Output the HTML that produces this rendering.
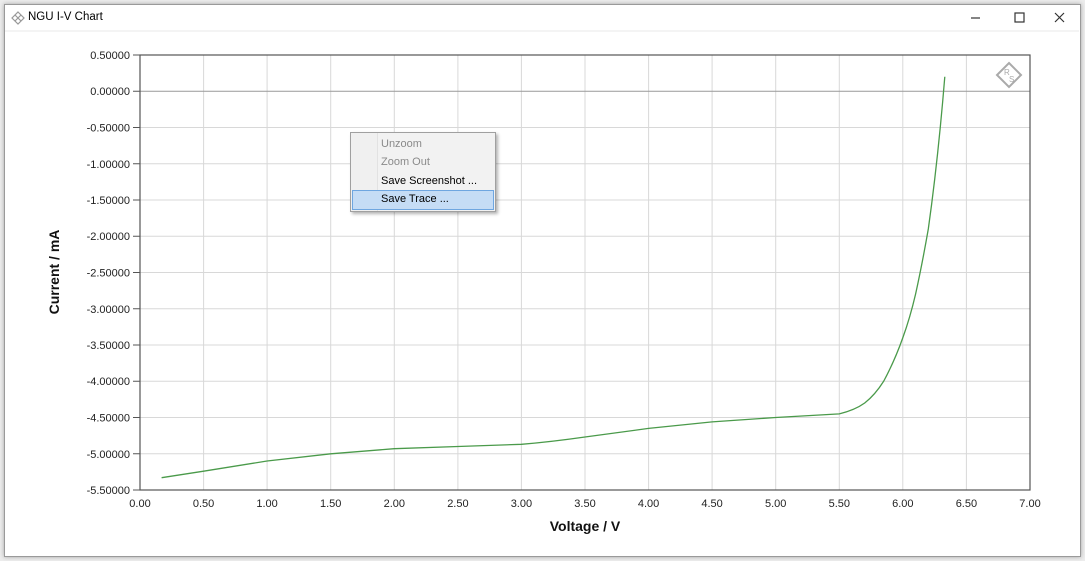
<!DOCTYPE html>
<html><head><style>
body{margin:0;width:1085px;height:561px;background:#ececec;font-family:"Liberation Sans",sans-serif;overflow:hidden;position:relative}
.win{position:absolute;left:4px;top:4px;width:1075px;height:551px;background:#fff;border:1px solid #9a9a9a;box-shadow:0 0 4px rgba(0,0,0,.3)}
.title{position:absolute;left:28px;top:11px;font-size:11.5px;color:#000}
.menu{position:absolute;left:350px;top:132px;width:144px;height:78px;background:#f2f2f2;border:1px solid #a0a0a0;box-shadow:2px 2px 3px rgba(0,0,0,.3);font-size:11px}
.menu div{position:absolute;left:30px}
</style></head><body>
<div class="win"></div>
<svg style="position:absolute;left:10px;top:10px" width="16" height="16"><g fill="none" stroke="#999" stroke-width="1.2"><path d="M8 2 L14 8 L8 14 L2 8Z"/><path d="M5 5 L11 11 M11 5 L5 11"/></g></svg>
<div class="title">NGU I-V Chart</div>
<svg style="position:absolute;left:0;top:0" width="1085" height="561">
<g stroke="#333" stroke-width="1.2"><line x1="971" y1="18" x2="980" y2="18"/></g>
<rect x="1015" y="13" width="9" height="9" fill="none" stroke="#333" stroke-width="1.2"/>
<path d="M1055 13 L1064 22 M1064 13 L1055 22" stroke="#333" stroke-width="1.2"/>
<line x1="5" y1="31" x2="1079" y2="31" stroke="#e8e8e8"/>
<g stroke="#d8d8d8" stroke-width="1">
<line x1="203.6" y1="55" x2="203.6" y2="490"/><line x1="267.1" y1="55" x2="267.1" y2="490"/><line x1="330.7" y1="55" x2="330.7" y2="490"/><line x1="394.3" y1="55" x2="394.3" y2="490"/><line x1="457.9" y1="55" x2="457.9" y2="490"/><line x1="521.4" y1="55" x2="521.4" y2="490"/><line x1="585" y1="55" x2="585" y2="490"/><line x1="648.6" y1="55" x2="648.6" y2="490"/><line x1="712.1" y1="55" x2="712.1" y2="490"/><line x1="775.7" y1="55" x2="775.7" y2="490"/><line x1="839.3" y1="55" x2="839.3" y2="490"/><line x1="902.8" y1="55" x2="902.8" y2="490"/><line x1="966.4" y1="55" x2="966.4" y2="490"/>
<line x1="140" y1="127.5" x2="1030" y2="127.5"/><line x1="140" y1="163.75" x2="1030" y2="163.75"/><line x1="140" y1="200" x2="1030" y2="200"/><line x1="140" y1="236.25" x2="1030" y2="236.25"/><line x1="140" y1="272.5" x2="1030" y2="272.5"/><line x1="140" y1="308.75" x2="1030" y2="308.75"/><line x1="140" y1="345" x2="1030" y2="345"/><line x1="140" y1="381.25" x2="1030" y2="381.25"/><line x1="140" y1="417.5" x2="1030" y2="417.5"/><line x1="140" y1="453.75" x2="1030" y2="453.75"/>
</g>
<line x1="140" y1="91.25" x2="1030" y2="91.25" stroke="#999"/>
<rect x="140" y="55" width="890" height="435" fill="none" stroke="#555" stroke-width="1.2"/>
<g stroke="#555"><line x1="133" y1="55" x2="140" y2="55"/><line x1="133" y1="91.25" x2="140" y2="91.25"/><line x1="133" y1="127.5" x2="140" y2="127.5"/><line x1="133" y1="163.75" x2="140" y2="163.75"/><line x1="133" y1="200" x2="140" y2="200"/><line x1="133" y1="236.25" x2="140" y2="236.25"/><line x1="133" y1="272.5" x2="140" y2="272.5"/><line x1="133" y1="308.75" x2="140" y2="308.75"/><line x1="133" y1="345" x2="140" y2="345"/><line x1="133" y1="381.25" x2="140" y2="381.25"/><line x1="133" y1="417.5" x2="140" y2="417.5"/><line x1="133" y1="453.75" x2="140" y2="453.75"/><line x1="133" y1="490" x2="140" y2="490"/></g>
<g font-size="11" fill="#222" text-anchor="end">
<text x="130" y="59">0.50000</text><text x="130" y="95">0.00000</text><text x="130" y="131.5">-0.50000</text><text x="130" y="168">-1.00000</text><text x="130" y="204">-1.50000</text><text x="130" y="240">-2.00000</text><text x="130" y="276.5">-2.50000</text><text x="130" y="313">-3.00000</text><text x="130" y="349">-3.50000</text><text x="130" y="385">-4.00000</text><text x="130" y="421.5">-4.50000</text><text x="130" y="458">-5.00000</text><text x="130" y="494">-5.50000</text></g>
<g font-size="11" fill="#222" text-anchor="middle">
<text x="140" y="507">0.00</text><text x="203.6" y="507">0.50</text><text x="267.1" y="507">1.00</text><text x="330.7" y="507">1.50</text><text x="394.3" y="507">2.00</text><text x="457.9" y="507">2.50</text><text x="521.4" y="507">3.00</text><text x="585" y="507">3.50</text><text x="648.6" y="507">4.00</text><text x="712.1" y="507">4.50</text><text x="775.7" y="507">5.00</text><text x="839.3" y="507">5.50</text><text x="902.8" y="507">6.00</text><text x="966.4" y="507">6.50</text><text x="1030" y="507">7.00</text></g>
<text x="585" y="531" font-size="14" font-weight="bold" text-anchor="middle" fill="#111">Voltage / V</text>
<text transform="translate(59,272) rotate(-90)" font-size="14" font-weight="bold" text-anchor="middle" fill="#111">Current / mA</text>
<path d="M161.6 477.7 L203.6 471.2 L267.1 461 L330.7 453.8 L394.3 448.7 L457.9 446.5 L521.4 444.3 Q550 442 585 437 L648.6 428.4 L712.1 421.9 L775.7 417.5 L839.3 413.9 Q855 410 864.7 403 Q875 395 883.8 381 Q895 360 902.8 337.75 Q910 318 915.6 294 Q922 265 928.3 229 Q938 160 944.8 76.75" fill="none" stroke="#4a9a4a" stroke-width="1.3"/>
<g fill="none" stroke="#aaa" stroke-width="2"><path d="M1009 63 L1021 75 L1009 87 L997 75Z"/></g>
<text x="1004" y="75" font-size="8" fill="#aaa">R</text><text x="1009" y="82" font-size="8" fill="#aaa">S</text>
</svg>
<div class="menu">
<div style="left:0;top:0;width:26px;height:78px;background:#f0f0f0;border-right:1px solid #e2e2e2"></div>
<div style="top:5px;color:#8a8a8a">Unzoom</div>
<div style="top:23px;color:#8a8a8a">Zoom Out</div>
<div style="top:42px;color:#000">Save Screenshot ...</div>
<div style="left:1px;top:57px;width:140px;height:18px;background:#c5dcf5;border:1px solid #6fa6e0"></div>
<div style="top:60px;color:#000">Save Trace ...</div>
</div>
</body></html>
